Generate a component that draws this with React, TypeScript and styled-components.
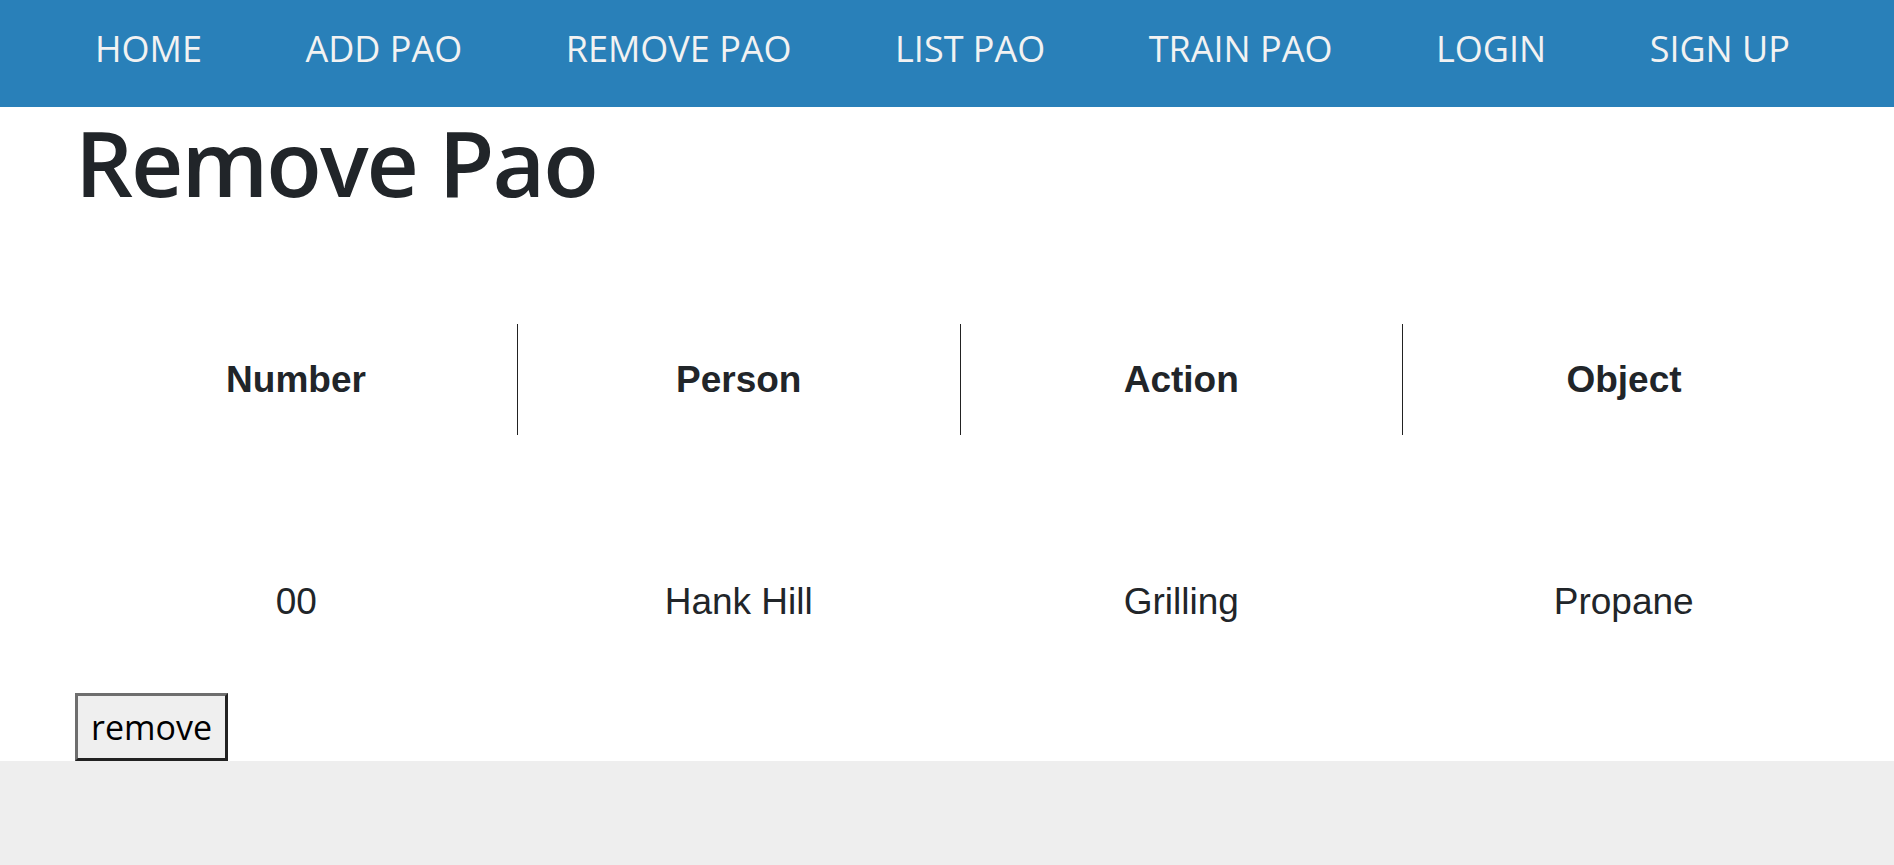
import styled, { createGlobalStyle } from "styled-components";

const GlobalStyle = createGlobalStyle`
  html, body {
    margin: 0;
    padding: 0;
    background: #eeeeee;
  }
  * {
    box-sizing: border-box;
  }
`;

const Page = styled.div`
  background: #ffffff;
`;

const NavBar = styled.nav`
  display: flex;
  align-items: flex-start;
  gap: 103.5px;
  height: 107px;
  padding: 24px 0 0 95px;
  background: #2980b9;
`;

const NavLink = styled.a`
  font-family: "Open Sans", "Noto Sans", sans-serif;
  font-size: 36px;
  line-height: 49px;
  color: #f2f2f2;
  text-decoration: none;
  white-space: nowrap;
  cursor: pointer;
`;

const Main = styled.main`
  padding: 0 49px 0 75px;
`;

const Title = styled.h1`
  margin: 0 0 107px;
  font-family: "Open Sans", "Noto Sans", sans-serif;
  font-size: 91px;
  font-weight: 600;
  letter-spacing: -2px;
  line-height: 110px;
  color: #212529;
`;

const Table = styled.table`
  width: 100%;
  table-layout: fixed;
  border-collapse: collapse;
  font-family: "Liberation Sans", Arial, sans-serif;
  font-size: 37px;
  color: #212529;
`;

const HeadCell = styled.th`
  height: 111px;
  padding: 0;
  font-weight: 700;
  text-align: center;
  vertical-align: middle;
  border-right: 1px solid #222;

  &:last-child {
    border-right: none;
  }
`;

const Cell = styled.td`
  padding: 146px 0 70px;
  line-height: 42px;
  text-align: center;
`;

const RemoveButton = styled.button`
  display: block;
  height: 68px;
  padding: 0 13px;
  font-family: "Open Sans", "Noto Sans", sans-serif;
  font-size: 34px;
  line-height: 1;
  color: #000;
  background: #efefef;
  border: 3px solid;
  border-color: #6e6e6e #222 #222 #6e6e6e;
  border-radius: 0;
  cursor: pointer;
`;

const links = ["HOME", "ADD PAO", "REMOVE PAO", "LIST PAO", "TRAIN PAO", "LOGIN", "SIGN UP"];
const columns = ["Number", "Person", "Action", "Object"];
const row = ["00", "Hank Hill", "Grilling", "Propane"];

export default function App() {
  return (
    <>
      <GlobalStyle />
      <Page>
        <NavBar>
          {links.map((l) => (
            <NavLink key={l}>{l}</NavLink>
          ))}
        </NavBar>
        <Main>
          <Title>Remove Pao</Title>
          <Table>
            <thead>
              <tr>
                {columns.map((c) => (
                  <HeadCell key={c}>{c}</HeadCell>
                ))}
              </tr>
            </thead>
            <tbody>
              <tr>
                {row.map((v) => (
                  <Cell key={v}>{v}</Cell>
                ))}
              </tr>
            </tbody>
          </Table>
          <RemoveButton>remove</RemoveButton>
        </Main>
      </Page>
    </>
  );
}
